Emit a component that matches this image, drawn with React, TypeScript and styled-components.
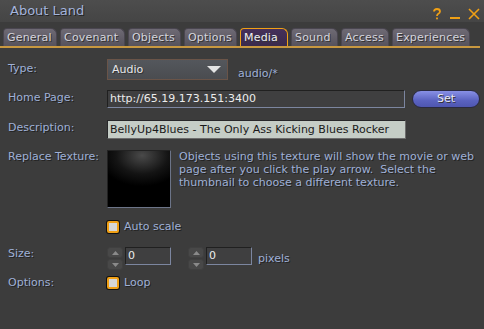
import React from 'react';
import styled, { createGlobalStyle } from 'styled-components';

const GlobalStyles = createGlobalStyle`
  html, body {
    margin: 0;
    padding: 0;
    background: #3c3c3c;
  }
  body {
    font-family: "DejaVu Sans", "Liberation Sans", sans-serif;
    font-size: 11px;
  }
`;

const labelBlue = '#9fb0d6';
const orange = '#f0a015';

const Floater = styled('div')`
  width: 484px;
  height: 329px;
  background: #3c3c3c;
  display: flex;
  flex-direction: column;
  overflow: hidden;
`;

const TitleBar = styled('div')`
  height: 22px;
  display: flex;
  align-items: center;
  padding: 0 4px 0 10px;
  background: linear-gradient(#4d4d4d, #454545);
`;

const Title = styled('div')`
  color: #a4b4dc;
  font-size: 13px;
  text-shadow: 1px 1px 0 #222;
  flex: 1;
  margin-top: -2px;
`;

const TitleIcons = styled('div')`
  display: flex;
  align-items: center;
  gap: 8px;
  margin-top: 6px;
`;

const TabStrip = styled('div')`
  display: flex;
  gap: 3px;
  padding: 6px 0 0 3px;
  border-bottom: 2px solid #c89840;
  height: 18px;
  margin-right: 4px;
`;

const Tab = styled('div')<{ $active?: boolean; $w: number }>`
  width: ${(p) => p.$w}px;
  box-sizing: border-box;
  height: 18px;
  border-radius: 4px 6px 0 0;
  padding-left: 3px;
  line-height: 17px;
  font-size: 11px;
  letter-spacing: 0.2px;
  color: ${(p) => (p.$active ? '#eeeef4' : '#d4d4dc')};
  text-shadow: 1px 1px 0 #333;
  background: ${(p) =>
    p.$active ? 'linear-gradient(#45305a, #3a2a4c)' : 'linear-gradient(#6e6a74, #56525c)'};
  border: ${(p) => (p.$active ? `1px solid ${orange}` : '1px solid #4a4650')};
  border-bottom: none;
`;

const Body = styled('div')`
  display: flex;
  flex-direction: column;
  padding: 11px 0 0 8px;
`;

const Row = styled('div')<{ $h: number; $mb?: number }>`
  display: flex;
  align-items: flex-start;
  height: ${(p) => p.$h}px;
  margin-bottom: ${(p) => p.$mb ?? 0}px;
`;

const Label = styled('div')<{ $top?: number }>`
  width: 99px;
  color: ${labelBlue};
  text-shadow: 1px 1px 0 #222;
  padding-top: ${(p) => p.$top ?? 2}px;
  flex-shrink: 0;
`;

const Combo = styled('div')`
  width: 121px;
  height: 21px;
  box-sizing: border-box;
  border: 1px solid #6a5448;
  background: linear-gradient(#54575c, #4a4c50);
  display: flex;
  align-items: center;
  padding: 0 6px 0 4px;
  color: #e6e6ea;
  font-size: 11px;
  text-shadow: 1px 1px 0 #333;
`;

const ComboText = styled('span')`
  flex: 1;
`;

const MimeText = styled('span')`
  color: ${labelBlue};
  margin: 8px 0 0 10px;
  text-shadow: 1px 1px 0 #222;
`;

const TextField = styled('div')<{ $w: number; $light?: boolean; $h?: number }>`
  width: ${(p) => p.$w}px;
  height: ${(p) => p.$h ?? 18}px;
  box-sizing: border-box;
  border: 1px solid ${(p) => (p.$light ? '#28282a' : '#202020')};
  border-right-color: ${(p) => (p.$light ? '#6c6c6c' : '#7c86a0')};
  border-bottom-color: ${(p) => (p.$light ? '#6c6c6c' : '#7c86a0')};
  background: ${(p) => (p.$light ? '#c5cdc6' : '#3f3f40')};
  color: ${(p) => (p.$light ? '#1a1a1a' : '#ececec')};
  padding: 0 2px;
  line-height: ${(p) => (p.$h ?? 18) - 2}px;
  white-space: nowrap;
  overflow: hidden;
`;

const SetButton = styled('div')`
  width: 68px;
  height: 18px;
  margin-left: 7px;
  border-radius: 9px;
  box-sizing: border-box;
  border: 1px solid #2a2a40;
  background: linear-gradient(#8890e6, #5a62c0 60%, #4e56b0);
  color: #e8e8f4;
  text-align: center;
  line-height: 16px;
  text-shadow: 1px 1px 0 #333;
`;

const Thumb = styled('div')`
  width: 64px;
  height: 58px;
  box-sizing: border-box;
  border: 1px solid #222;
  border-right-color: #6c7488;
  border-bottom-color: #6c7488;
  background: radial-gradient(ellipse 70% 55% at 55% 8%, #4a4a4a, #141414 60%, #000 100%);
`;

const HelpText = styled('div')`
  color: ${labelBlue};
  text-shadow: 1px 1px 0 #222;
  margin-left: 8px;
  line-height: 13px;
  white-space: pre;
`;

const CheckWrap = styled('div')`
  display: flex;
  align-items: center;
  gap: 5px;
  color: ${labelBlue};
  text-shadow: 1px 1px 0 #222;
`;

const CheckBox = styled('div')`
  width: 12px;
  height: 12px;
  box-sizing: border-box;
  border: 2px solid ${orange};
  border-radius: 2px;
  background: #d6d6d6;
  box-shadow: 0 0 0 1px #111;
`;

const Spinner = styled('div')`
  display: flex;
  flex-direction: column;
  gap: 1px;
  width: 16px;
  margin-right: 2px;
`;

const SpinButton = styled('div')`
  height: 9px;
  border-radius: 3px;
  background: #484848;
  border: 1px solid #404040;
  display: flex;
  align-items: center;
  justify-content: center;
`;

const SpinGroup = styled('div')<{ $ml?: number }>`
  display: flex;
  margin-left: ${(p) => p.$ml ?? 0}px;
`;

const Up = () => (
  <svg width="7" height="4" viewBox="0 0 7 4">
    <path d="M0 4 L3.5 0 L7 4 Z" fill="#8a8a8a" />
  </svg>
);
const Down = () => (
  <svg width="7" height="4" viewBox="0 0 7 4">
    <path d="M0 0 L3.5 4 L7 0 Z" fill="#8a8a8a" />
  </svg>
);

function SpinField({ ml }: { ml?: number }) {
  return (
    <SpinGroup $ml={ml}>
      <Spinner>
        <SpinButton>
          <Up />
        </SpinButton>
        <SpinButton>
          <Down />
        </SpinButton>
      </Spinner>
      <TextField $w={46}>0</TextField>
    </SpinGroup>
  );
}

const tabs: [string, number][] = [
  ['General', 54],
  ['Covenant', 65],
  ['Objects', 53],
  ['Options', 53],
  ['Media', 48],
  ['Sound', 47],
  ['Access', 48],
  ['Experiences', 78],
];

export default function App() {
  return (
    <>
      <GlobalStyles />
      <Floater>
        <TitleBar>
          <Title>About Land</Title>
          <TitleIcons>
            <svg width="10" height="12" viewBox="0 0 10 12">
              <path d="M2 3.5 Q2 1 5 1 Q8 1 8 3.5 Q8 5 6 6 Q5 6.6 5 8" stroke={orange} strokeWidth="1.8" fill="none" />
              <rect x="4.1" y="9.5" width="1.8" height="1.8" fill={orange} />
            </svg>
            <svg width="10" height="12" viewBox="0 0 10 12">
              <rect x="0" y="9" width="10" height="2" fill={orange} />
            </svg>
            <svg width="12" height="12" viewBox="0 0 12 12">
              <path d="M1 1 L11 11 M11 1 L1 11" stroke={orange} strokeWidth="1.6" />
            </svg>
          </TitleIcons>
        </TitleBar>
        <TabStrip>
          {tabs.map(([name, w]) => (
            <Tab key={name} $w={w} $active={name === 'Media'}>
              {name}
            </Tab>
          ))}
        </TabStrip>
        <Body>
          <Row $h={21} $mb={10}>
            <Label $top={3}>Type:</Label>
            <Combo>
              <ComboText>Audio</ComboText>
              <svg width="14" height="7" viewBox="0 0 14 7">
                <path d="M0 0 H14 L7 7 Z" fill="#e4e4e4" />
              </svg>
            </Combo>
            <MimeText>audio/*</MimeText>
          </Row>
          <Row $h={18} $mb={12}>
            <Label $top={1}>Home Page:</Label>
            <TextField $w={298}>http://65.19.173.151:3400</TextField>
            <SetButton>Set</SetButton>
          </Row>
          <Row $h={19} $mb={11}>
            <Label $top={1}>Description:</Label>
            <TextField $w={299} $h={19} $light>
              BellyUp4Blues - The Only Ass Kicking Blues Rocker
            </TextField>
          </Row>
          <Row $h={58} $mb={12}>
            <Label $top={0}>Replace Texture:</Label>
            <Thumb />
            <HelpText>
              {'Objects using this texture will show the movie or web\npage after you click the play arrow.  Select the\nthumbnail to choose a different texture.'}
            </HelpText>
          </Row>
          <Row $h={14} $mb={13}>
            <Label />
            <CheckWrap>
              <CheckBox />
              Auto scale
            </CheckWrap>
          </Row>
          <Row $h={20} $mb={9}>
            <Label $top={0}>Size:</Label>
            <SpinField />
            <SpinField ml={17} />
            <MimeText style={{ marginTop: 5, marginLeft: 6 }}>pixels</MimeText>
          </Row>
          <Row $h={14}>
            <Label $top={0}>Options:</Label>
            <CheckWrap>
              <CheckBox />
              Loop
            </CheckWrap>
          </Row>
        </Body>
      </Floater>
    </>
  );
}
